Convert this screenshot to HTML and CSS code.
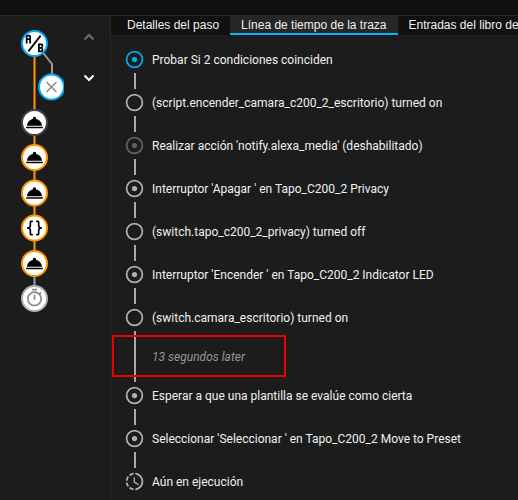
FILE: index.html
```html
<!DOCTYPE html>
<html lang="es">
<head>
<meta charset="UTF-8">
<meta name="viewport" content="width=device-width, initial-scale=1.0">
<title>Traza</title>
<link rel="stylesheet" href="styles.css">
</head>
<body>

<!-- Shared icons -->
<svg class="sprite" aria-hidden="true">
  <symbol id="record" viewBox="0 0 24 24"><path d="M12,2A10,10 0 0,0 2,12A10,10 0 0,0 12,22A10,10 0 0,0 22,12A10,10 0 0,0 12,2M12,20A8,8 0 0,1 4,12A8,8 0 0,1 12,4A8,8 0 0,1 20,12A8,8 0 0,1 12,20M12,9A3,3 0 0,0 9,12A3,3 0 0,0 12,15A3,3 0 0,0 15,12A3,3 0 0,0 12,9Z"/></symbol>
  <symbol id="circle" viewBox="0 0 24 24"><path d="M12,20A8,8 0 0,1 4,12A8,8 0 0,1 12,4A8,8 0 0,1 20,12A8,8 0 0,1 12,20M12,2A10,10 0 0,0 2,12A10,10 0 0,0 12,22A10,10 0 0,0 22,12A10,10 0 0,0 12,2Z"/></symbol>
  <symbol id="progress-clock" viewBox="0 0 24 24"><path d="M13,2.03V2.05L13,4.05C17.39,4.59 20.5,8.58 19.96,12.97C19.5,16.61 16.64,19.5 13,19.93V21.93C18.5,21.38 22.5,16.5 21.95,11C21.5,6.25 17.73,2.5 13,2.03M11,2.06C9.05,2.25 7.19,3 5.67,4.26L7.1,5.74C8.22,4.84 9.57,4.26 11,4.06V2.06M4.26,5.67C3,7.19 2.25,9.04 2.05,11H4.05C4.24,9.58 4.8,8.23 5.69,7.1L4.26,5.67M2.06,13C2.26,14.96 3.03,16.81 4.27,18.33L5.69,16.9C4.81,15.77 4.24,14.42 4.06,13H2.06M7.1,18.37L5.67,19.74C7.18,21 9.04,21.79 11,22V20C9.58,19.82 8.23,19.25 7.1,18.37M12.5,7V12.25L17,14.92L16.25,16.15L11,13V7H12.5Z"/></symbol>
  <symbol id="room-service" viewBox="0 0 24 24"><path d="M12,5A2,2 0 0,1 14,7C14,7.24 13.96,7.47 13.88,7.69C17.95,8.5 21,11.91 21,16H3C3,11.91 6.05,8.5 10.12,7.69C10.04,7.47 10,7.24 10,7A2,2 0 0,1 12,5M22,19H2V17H22V19Z"/></symbol>
  <symbol id="ab-testing" viewBox="0 0 24 24"><path d="M4 2A2 2 0 0 0 2 4V12H4V8H6V12H8V4A2 2 0 0 0 6 2H4M4 4H6V6H4M22 15.5V14A2 2 0 0 0 20 12H16V22H20A2 2 0 0 0 22 20V18.5A1.54 1.54 0 0 0 20.5 17A1.54 1.54 0 0 0 22 15.5M20 20H18V18H20V20M20 16H18V14H20M5.79 21.61L4.21 20.39L18.21 2.39L19.79 3.61Z"/></symbol>
  <symbol id="close" viewBox="0 0 24 24"><path d="M19,6.41L17.59,5L12,10.59L6.41,5L5,6.41L10.59,12L5,17.59L6.41,19L12,13.41L17.59,19L19,17.59L13.41,12L19,6.41Z"/></symbol>
  <symbol id="braces" viewBox="0 0 24 24"><path d="M8,3A2,2 0 0,0 6,5V9A2,2 0 0,1 4,11H3V13H4A2,2 0 0,1 6,15V19A2,2 0 0,0 8,21H10V19H8V14A2,2 0 0,0 6,12A2,2 0 0,0 8,10V5H10V3M16,3A2,2 0 0,1 18,5V9A2,2 0 0,0 20,11H21V13H20A2,2 0 0,0 18,15V19A2,2 0 0,1 16,21H14V19H16V14A2,2 0 0,1 18,12A2,2 0 0,1 16,10V5H14V3H16Z"/></symbol>
  <symbol id="timer" viewBox="0 0 24 24"><path d="M12,20A7,7 0 0,1 5,13A7,7 0 0,1 12,6A7,7 0 0,1 19,13A7,7 0 0,1 12,20M19.03,7.39L20.45,5.97C20,5.46 19.55,5 19.04,4.56L17.62,6C16.07,4.74 14.12,4 12,4A9,9 0 0,0 3,13A9,9 0 0,0 12,22C17,22 21,17.97 21,13C21,10.88 20.26,8.93 19.03,7.39M11,14H13V8H11M15,1H9V3H15V1Z"/></symbol>
</svg>

<header class="topbar"></header>

<div class="main">

  <!-- Script graph -->
  <aside class="graph">
    <svg class="tree" viewBox="0 0 50 300" role="img" aria-label="Grafo de la traza">
      <path class="track idle" d="M22 28 L38 48 V62"/>
      <path class="track" d="M20.5 28 V248"/>
      <path class="track idle" d="M20.5 260 V274"/>
      <circle class="node active" cx="20.5" cy="27.5" r="12.5"/>
      <circle class="node active" cx="37.5" cy="71" r="12.5"/>
      <circle class="node current" cx="20.5" cy="106.5" r="12.5"/>
      <circle class="node" cx="20.5" cy="141.5" r="12.5"/>
      <circle class="node" cx="20.5" cy="177" r="12.5"/>
      <circle class="node" cx="20.5" cy="212" r="12.5"/>
      <circle class="node" cx="20.5" cy="247.5" r="12.5"/>
      <circle class="node idle" cx="20.5" cy="282.5" r="12.5"/>
      <use href="#ab-testing" x="10" y="17" width="21" height="21"/>
      <use class="muted" href="#close" x="28" y="61.5" width="19" height="19"/>
      <use href="#room-service" x="10.5" y="96.5" width="20" height="20"/>
      <use href="#room-service" x="10.5" y="131.5" width="20" height="20"/>
      <use href="#room-service" x="10.5" y="167" width="20" height="20"/>
      <use href="#braces" x="10.5" y="202" width="20" height="20"/>
      <use href="#room-service" x="10.5" y="237.5" width="20" height="20"/>
      <use class="muted" href="#timer" x="10.5" y="272" width="20" height="20"/>
    </svg>
    <div class="nav">
      <button class="nav-btn" aria-label="Anterior" disabled>
        <svg viewBox="0 0 12 8"><path d="M1.5 6.5 L6 2 L10.5 6.5"/></svg>
      </button>
      <button class="nav-btn" aria-label="Siguiente">
        <svg viewBox="0 0 12 8"><path d="M1.5 1.5 L6 6 L10.5 1.5"/></svg>
      </button>
    </div>
  </aside>

  <!-- Trace info -->
  <section class="info">
    <div class="tabs" role="tablist">
      <button class="tab" role="tab">Detalles del paso</button>
      <button class="tab active" role="tab" aria-selected="true">Línea de tiempo de la traza</button>
      <button class="tab" role="tab">Entradas del libro de registro</button>
    </div>

    <ol class="timeline">
      <li class="entry selected"><svg class="dot"><use href="#record"/></svg><span>Probar Si 2 condiciones coinciden</span></li>
      <li class="entry"><svg class="dot"><use href="#circle"/></svg><span>(script.encender_camara_c200_2_escritorio) turned on</span></li>
      <li class="entry disabled"><svg class="dot"><use href="#record"/></svg><span>Realizar acción 'notify.alexa_media' (deshabilitado)</span></li>
      <li class="entry"><svg class="dot"><use href="#record"/></svg><span>Interruptor 'Apagar ' en Tapo_C200_2 Privacy</span></li>
      <li class="entry"><svg class="dot"><use href="#circle"/></svg><span>(switch.tapo_c200_2_privacy) turned off</span></li>
      <li class="entry"><svg class="dot"><use href="#record"/></svg><span>Interruptor 'Encender ' en Tapo_C200_2 Indicator LED</span></li>
      <li class="entry has-delay"><svg class="dot"><use href="#circle"/></svg><span>(switch.camara_escritorio) turned on</span>
        <em class="delay">13 segundos later</em>
      </li>
      <li class="entry"><svg class="dot"><use href="#record"/></svg><span>Esperar a que una plantilla se evalúe como cierta</span></li>
      <li class="entry"><svg class="dot"><use href="#record"/></svg><span>Seleccionar 'Seleccionar ' en Tapo_C200_2 Move to Preset</span></li>
      <li class="entry"><svg class="dot"><use href="#progress-clock"/></svg><span>Aún en ejecución</span></li>
    </ol>
  </section>

</div>

</body>
</html>
```
FILE: styles.css
```css
*, *::before, *::after { box-sizing: border-box; }
body {
  margin: 0;
  min-height: 100vh;
  display: flex;
  flex-direction: column;
  overflow: hidden;
  background-color: #1c1c1c;
  color: #f0f0f0;
  font-family: Roboto, sans-serif;
  font-size: 12px;
}
button { border: 0; padding: 0; background: none; color: inherit; }
.sprite { position: absolute; width: 0; height: 0; }

.topbar { height: 16px; background-color: #111; border-bottom: 1px solid #272727; }
.main { display: flex; flex: 1; }

/* Graph column */
.graph {
  flex: none;
  display: flex;
  align-items: flex-start;
  gap: 19px;
  width: 111px;
  padding-left: 14px;
  border-right: 1px solid #272727;
}
.tree { width: 50px; height: 300px; }
.track { fill: none; stroke: #ff9800; stroke-width: 2; }
.track.idle { stroke: #9b9b9b; }
.node { fill: #fff; stroke: #ff9800; stroke-width: 2; }
.node.active { stroke: #03a9f4; }
.node.current { stroke: #44444c; }
.node.idle { stroke: #b0b0b0; }
.muted { fill: #8a8a8a; }
.nav { display: flex; flex-direction: column; gap: 33px; padding-top: 17px; }
.nav-btn { display: flex; width: 12px; height: 8px; }
.nav-btn svg { width: 12px; height: 8px; fill: none; stroke: #fff; stroke-width: 2; }
.nav-btn:disabled svg { stroke: #6f6f6f; }

/* Tabs */
.info { flex: 1; min-width: 0; }
.tabs {
  display: flex;
  padding-left: 5px;
  height: 19px;
  overflow: hidden;
  background-color: #111;
}
.tab {
  flex: none;
  padding: 0 11px;
  border-bottom: 2px solid #111;
  font: 12px "Liberation Sans", Arial, sans-serif;
}
.tab.active { background-color: #262626; border-bottom-color: #03b5f4; }

/* Timeline */
.timeline { list-style: none; margin: 0; padding: 14px 13px 0; }
.entry {
  position: relative;
  display: grid;
  grid-template-columns: 21px 1fr;
  grid-template-rows: 21px 1fr;
  column-gap: 7px;
  align-items: center;
  height: 43px;
  white-space: nowrap;
}
.dot { grid-column: 1; grid-row: 1; width: 21px; height: 21px; fill: #b0b0b0; }
.selected .dot { fill: #03a9f4; }
.disabled .dot { fill: #616161; }
/* Connector to the next entry */
.entry:not(:last-child)::before {
  content: "";
  grid-column: 1;
  grid-row: 2;
  align-self: stretch;
  justify-self: center;
  width: 2px;
  margin: 3px 0;
  background-color: #a8a8a8;
}
.entry span { grid-column: 2; grid-row: 1; }
.has-delay { height: 78px; }
.delay { grid-column: 2; grid-row: 2; color: #969696; }
/* Highlight frame around the delay */
.has-delay::after {
  content: "";
  position: absolute;
  top: 28px;
  left: -12px;
  width: 174px;
  height: 42px;
  border: 2px solid #ee0000;
}
```
